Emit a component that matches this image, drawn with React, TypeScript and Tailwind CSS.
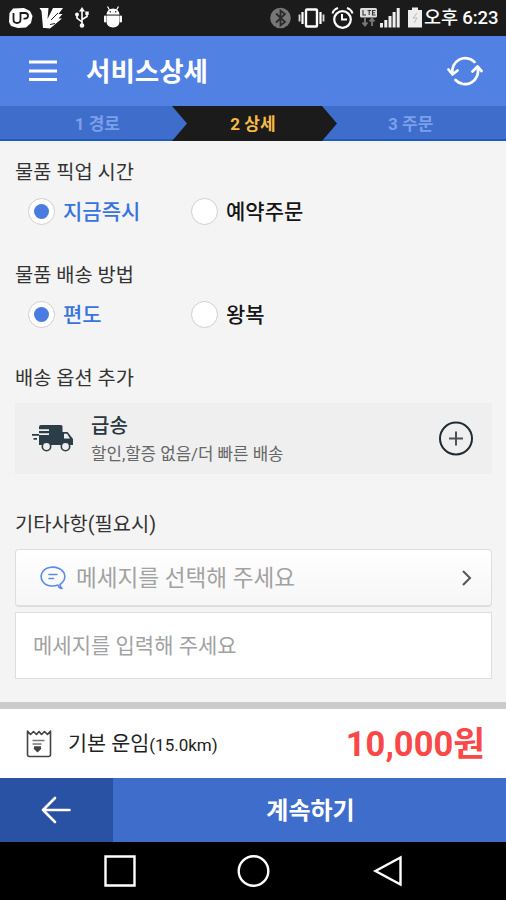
import type { ReactNode } from "react";

const STEPS = [
  { id: 1, label: "1 경로" },
  { id: 2, label: "2 상세" },
  { id: 3, label: "3 주문" },
];

function StatusBar() {
  return (
    <div className="h-9 bg-[#1b1b1b] flex items-center justify-between pl-2 pr-2 text-white">
      <div className="flex items-center">
        <svg width="116" height="26" viewBox="0 0 116 26">
          <path d="M5 3.500 16 3l6 3 2.500 5-1.500 7-5 4.500-8 .5-7-2-2-4 .5-9z" fill="#fff" />
          <path d="M5.500 8v6.500q0 3.500 3.500 3.500t3.500-3.500V8H17q3 0 3 2.800t-3 2.800h-1.500" fill="none" stroke="#1b1b1b" strokeWidth="1.800" />
          <path d="M31.500 3h9l-1 11 5.500-11h10l-4.500 6h4l-4 4.500h3.500L42 23.500l-5-.5h-2L33.500 6z" fill="#fff" />
          <path d="m43 15 7-7M42 19.500l5-1" stroke="#1b1b1b" strokeWidth="1" />
          <g fill="none" stroke="#fff" strokeWidth="1.600">
            <path d="M74 5v15M74 17l-5-4v-3M74 14.500l5-3V8" />
          </g>
          <g fill="#fff">
            <path d="M71 6.500 74 2l3 4.500z" />
            <circle cx="74" cy="20.500" r="2.300" />
            <circle cx="69" cy="9.500" r="1.900" />
            <path d="M77.300 6.500h3.400v3.400h-3.400z" />
            <path d="M98.500 9.500a6.500 6 0 0 1 13 0zM98.500 11h13v5.500q0 5.500-6.500 6-6.500-.5-6.500-6z" />
            <rect x="96" y="10.500" width="2.200" height="7" rx="1.100" />
            <rect x="111.800" y="10.500" width="2.200" height="7" rx="1.100" />
          </g>
          <path d="m99.500 1.500 2 3.500M110.500 1.500l-2 3.500" stroke="#fff" strokeWidth="1.200" />
          <circle cx="102.300" cy="6.800" r=".8" fill="#1b1b1b" />
          <circle cx="107.700" cy="6.800" r=".8" fill="#1b1b1b" />
          <path d="M98.500 10.200h13" stroke="#aaa" strokeWidth="1" />
        </svg>
      </div>
      <div className="flex items-center">
        <svg width="154" height="26" viewBox="0 0 154 26">
          <circle cx="10.500" cy="13" r="10.300" fill="#777" />
          <path d="m6 8.500 9 8.500-4.500 3.500v-15L15 9l-9 8.500" fill="none" stroke="#2a2a2a" strokeWidth="1.800" />
          <rect x="36" y="4.500" width="11" height="17" rx="1" fill="none" stroke="#fff" strokeWidth="2.400" />
          <path d="M32.500 7v12M50.500 7v12" stroke="#fff" strokeWidth="2.200" />
          <path d="M29.500 9.500v7M53.500 9.500v7" stroke="#ddd" strokeWidth="1.800" />
          <circle cx="72.500" cy="14.500" r="8.300" fill="none" stroke="#fff" strokeWidth="2.200" />
          <path d="M72 9v5.500h5M62.500 8.500q1-4 5.500-5.500M82.500 8.500q-1-4-5.500-5.500" fill="none" stroke="#fff" strokeWidth="2" />
          <rect x="90" y="3" width="17" height="9.500" rx="1.500" fill="#ddd" />
          <path d="M93 5v5h3M97.500 5.500h3.500M99.200 5.500V10M105.500 5.500h-3V10h3M102.500 7.700h2.500" fill="none" stroke="#333" strokeWidth="1.100" />
          <path d="M95 13v7M92.500 17.500 95 20.500l2.500-3M102 21v-7M99.500 16.500l2.500-3 2.500 3" fill="none" stroke="#777" strokeWidth="1.900" />
          <g fill="#eee">
            <path d="M110 18h3v4.500h-3zM114.300 15h3v7.500h-3zM118.500 11h3v11.500h-3zM122.600 7h3v15.500h-3zM126.700 3h3v19.500h-3z" />
            <path d="M142 2.500h6V5h4v17.500h-14V5h4z" />
          </g>
          <path d="m147 8-4 5h4l-3 5" fill="none" stroke="#bbb" />
        </svg>
        <span className="w-[74px] text-[18.500px] leading-6 whitespace-nowrap tracking-[-0.1px] font-medium">오후 6:23</span>
      </div>
    </div>
  );
}

function Header() {
  return (
    <header className="h-[70px] bg-[#5181e2] flex items-center pl-[29px] pr-[23px] text-white">
      <svg width="28" height="22" viewBox="0 0 28 22">
        <path d="M0 2h28M0 11h28M0 19.500h28" stroke="#fff" strokeWidth="2.800" />
      </svg>
      <h1 className="ml-[29px] mt-[2px] flex-1 text-[26.500px] leading-[38px] font-bold">서비스상세</h1>
      <svg width="36" height="30" viewBox="0 0 36 30" fill="none" stroke="#fff" strokeWidth="2.700" strokeLinecap="round" strokeLinejoin="round">
        <path d="M5.500 17.500A13 13 0 0 1 27.500 6" />
        <path d="M30.500 11.500A13 13 0 0 1 8.500 24" />
        <path d="m1.500 13.500 4 5 5-4M25.500 15.500l5-5 4 4.500" />
      </svg>
    </header>
  );
}

function Steps() {
  return (
    <nav className="relative h-[35px] bg-[#3f6dcc] border-b-2 border-[#1e5bc2] grid grid-cols-3 text-center text-[17px] font-bold text-[#7c9fe9]">
      <svg className="absolute left-[172px] top-0" width="166" height="35" viewBox="0 0 166 35">
        <path d="M0 0h150l15 17.500L150 35H0l15-17.500z" fill="#1b1b1b" />
      </svg>
      {STEPS.map((step) => (
        <span
          key={step.id}
          className={
            step.id === 2
              ? "relative leading-[37px] text-[#f6b945]"
              : step.id === 1
                ? "relative leading-[37px] pl-[26px]"
                : "relative leading-[37px] pr-[22px]"
          }
        >
          {step.label}
        </span>
      ))}
    </nav>
  );
}

function Label({ children }: { children: ReactNode }) {
  return <h2 className="text-[19.800px] leading-[30px] text-[#333] whitespace-nowrap">{children}</h2>;
}

function Radio({ label, checked }: { label: string; checked?: boolean }) {
  return (
    <div className="w-[163px] flex items-center gap-[8px]">
      <span className="size-[27px] shrink-0 rounded-full border border-[#cfcfcf] bg-white flex items-center justify-center">
        {checked && <span className="size-[15px] rounded-full bg-[#4a7be0]" />}
      </span>
      <span
        className={
          checked
            ? "pt-[2px] text-[21px] leading-7 font-medium text-[#3874df]"
            : "pt-[2px] text-[21px] leading-7 font-medium text-[#151515]"
        }
      >
        {label}
      </span>
    </div>
  );
}

function TruckIcon() {
  return (
    <svg width="42" height="27" viewBox="0 0 42 27">
      <path d="M9 0h20q1.500 0 1.500 1.500V20H7V2q0-2 2-2z" fill="#2b3e48" />
      <path d="M30 7h5.500l4 5 1.500 2v6H30z" fill="#2b3e48" />
      <path d="M32 8.800h3l3 4.700h-6z" fill="#efefef" />
      <path d="M7 5.200h10M7 9.200h10" stroke="#efefef" strokeWidth="1.800" />
      <path d="M0 9.800h7M1.500 13.800h3.500" stroke="#2b3e48" strokeWidth="1.800" />
      <g fill="#efefef" stroke="#2b3e48" strokeWidth="1.600">
        <circle cx="14.500" cy="21.500" r="4.200" />
        <circle cx="33.500" cy="21.500" r="4.200" />
      </g>
    </svg>
  );
}

export default function App() {
  return (
    <div className="w-[506px] h-[900px] overflow-hidden flex flex-col bg-[#f4f4f4] font-[Roboto,'Noto_Sans_CJK_KR',sans-serif]">
      <StatusBar />
      <Header />
      <Steps />

      <main className="flex-1 px-[15px] pt-[17px]">
        <Label>물품 픽업 시간</Label>
        <div className="mt-[9px] pl-[13px] flex h-7">
          <Radio label="지금즉시" checked />
          <Radio label="예약주문" />
        </div>

        <div className="mt-9">
          <Label>물품 배송 방법</Label>
        </div>
        <div className="mt-[9px] pl-[13px] flex h-7">
          <Radio label="편도" checked />
          <Radio label="왕복" />
        </div>

        <div className="mt-9">
          <Label>배송 옵션 추가</Label>
        </div>
        <div className="mt-[9px] w-[477px] h-[71px] bg-[#efefef] flex items-center pl-[17px] pr-[19px]">
          <TruckIcon />
          <div className="ml-[17px] mt-[3px] flex-1 whitespace-nowrap">
            <p className="text-[20px] leading-[29px] font-medium text-[#2b3840]">급송</p>
            <p className="text-[16.800px] leading-[27px] text-[#666]">할인,할증 없음/더 빠른 배송</p>
          </div>
          <svg className="-mr-px" width="35" height="35" viewBox="0 0 35 35" fill="none">
            <circle cx="17" cy="17.500" r="16" stroke="#202c33" strokeWidth="2" />
            <path d="M10 17.500h14M17 10.500v14" stroke="#4c5257" strokeWidth="2" />
          </svg>
        </div>

        <div className="mt-9">
          <Label>기타사항(필요시)</Label>
        </div>
        <div className="mt-[9px] w-[477px] h-[58px] rounded-[4px] border border-[#dedede] border-b-2 bg-linear-to-b from-white to-[#f6f6f6] flex items-center pl-6 pr-[19px]">
          <svg width="26" height="24" viewBox="0 0 26 24" fill="none" stroke="#5c8bea" strokeWidth="1.600" strokeLinecap="round" strokeLinejoin="round">
            <path d="M20 18.500C27 13.500 26 5.500 19 2.500 13-.2 5 1 2 7c-3 6.500 2.500 13 10 13 2 0 4-.2 6-1 .5 2 2 3.500 4 3.500-1-1-2-2.500-2-4z" />
            <path d="M9 8.500h8M9 12.500h4.500" />
          </svg>
          <span className="ml-[10px] mt-[2px] flex-1 text-[22.600px] leading-8 text-[#a2a2a2] whitespace-nowrap">메세지를 선택해 주세요</span>
          <svg width="10" height="16" viewBox="0 0 10 16" fill="none" stroke="#555" strokeWidth="2">
            <path d="m1 1 7 7-7 7" />
          </svg>
        </div>
        <div className="mt-[5px] w-[477px] h-[67px] border border-[#dedede] bg-white flex items-center pl-[17px]">
          <span className="mt-px text-[21px] leading-8 text-[#a2a2a2] whitespace-nowrap">메세지를 입력해 주세요</span>
        </div>
      </main>

      <section className="h-[76px] border-t-[7px] border-[#cbcbcb] bg-white flex items-center pl-[26px] pr-[21px]">
        <svg width="26" height="28" viewBox="0 0 26 28" fill="none" stroke="#444" strokeWidth="1.600" strokeLinejoin="round">
          <path d="M1.500 1v23.500q0 2 2 2h19q2 0 2-2V1l-3 3.500-3-3-3 3-2.500-3-2.500 3-3-3-3 3z" />
          <path d="M6.500 10.500h12M6.500 14h9" stroke="#777" />
          <path d="M8 17h7M8.500 18.500h6l-3 3z" fill="#444" />
        </svg>
        <p className="ml-4 mt-[2px] flex-1 text-[20.700px] leading-8 text-[#222] whitespace-nowrap">
          기본 운임<span className="text-[17px]">(15.0km)</span>
        </p>
        <strong className="mt-px text-[34.500px] leading-[50px] font-bold text-[#fa4848] whitespace-nowrap">10,000원</strong>
      </section>

      <div className="h-16 flex text-white">
        <div className="w-[113px] bg-[#2951a4] flex items-center justify-center">
          <svg className="-ml-px" width="30" height="28" viewBox="0 0 30 28" fill="none" stroke="#fff" strokeWidth="2.600" strokeLinecap="round" strokeLinejoin="round">
            <path d="M28.500 14H2M14 2 2 14l12 12" />
          </svg>
        </div>
        <button className="flex-1 bg-[#3f6dcc] pt-[2px] pl-[2px] text-[24px] leading-9 font-bold">계속하기</button>
      </div>

      <div className="h-[58px] bg-black">
        <svg width="506" height="58" viewBox="0 0 506 58" fill="none" stroke="#fff" strokeWidth="2.400">
          <path d="M105.500 14.500h29v29h-29zM400.500 15.500v27L375.500 29z" />
          <circle cx="253.500" cy="29" r="14.800" />
        </svg>
      </div>
    </div>
  );
}
